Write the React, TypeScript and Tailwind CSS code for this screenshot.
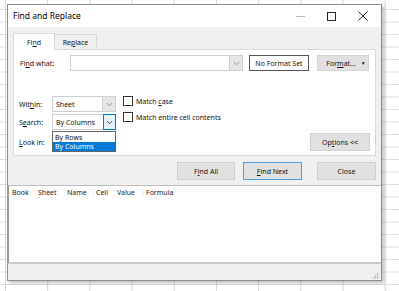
import React from "react";

const U = ({ children }: { children: React.ReactNode }) => (
  <span className="underline underline-offset-[1px] decoration-[0.5px]">{children}</span>
);

const Chevron = ({ color = "#7a7a7a" }: { color?: string }) => (
  <svg width="7" height="5" viewBox="0 0 7 5">
    <path d="M0.8 1 L3.5 3.8 L6.2 1" fill="none" stroke={color} strokeWidth="0.9" />
  </svg>
);

const Checkbox = ({ label }: { label: React.ReactNode }) => (
  <div className="flex items-center h-[10px] gap-[3px]">
    <div className="w-[10px] h-[10px] border border-[#333] bg-white shrink-0" />
    <span className="whitespace-nowrap">{label}</span>
  </div>
);

const Select = ({ value, active = false }: { value: string; active?: boolean }) => (
  <div className="flex h-[16px] w-[64px] border border-[#cfcfcf] bg-white">
    <div className="flex-1 flex items-center pl-[3px] text-[#111]">{value}</div>
    <div
      className={
        active
          ? "w-[13px] flex items-center justify-center border border-[#0078d7] bg-[#e5f1fb] -m-px"
          : "w-[13px] flex items-center justify-center bg-[#e6e6e6] border-l border-[#cfcfcf]"
      }
    >
      <Chevron color={active ? "#333" : "#888"} />
    </div>
  </div>
);

const Button = ({ children, w, primary = false }: { children: React.ReactNode; w: string; primary?: boolean }) => (
  <div
    className={
      "h-[18px] flex items-center justify-center bg-[#e1e1e1] border " +
      (primary ? "border-[#4c9ce0] " : "border-[#cfcfcf] ") +
      w
    }
  >
    {children}
  </div>
);

export default function App() {
  return (
    <div
      className="w-[399px] h-[291px] overflow-hidden bg-white bg-[linear-gradient(to_right,#d6d6d6_1px,transparent_1px),linear-gradient(to_bottom,#dcdcdc_1px,transparent_1px)] bg-[size:42.2px_12.5px] bg-[position:5px_9px] pt-[4px] pl-[7px]"
      style={{ fontFamily: '"Noto Sans", "Open Sans", sans-serif' }}
    >
      <div className="w-[375px] h-[277px] flex flex-col border border-[#8c8c8c] shadow-[2px_2px_3px_rgba(0,0,0,0.25)] text-[7px] leading-none text-[#111]">
        {/* Title bar */}
        <div className="h-[22px] bg-white flex items-center shrink-0">
          <div className="pl-[5px] text-[8.5px] text-black flex-1">Find and Replace</div>
          <div className="flex items-center gap-[22px] pr-[13px]">
            <div className="w-[9px] h-px bg-[#b8b8b8]" />
            <div className="w-[9px] h-[9px] border border-[#222]" />
            <svg width="10" height="10" viewBox="0 0 10 10">
              <path d="M0.5 0.5 L9.5 9.5 M9.5 0.5 L0.5 9.5" stroke="#222" strokeWidth="1" />
            </svg>
          </div>
        </div>

        {/* Body */}
        <div className="h-[158px] bg-[#f0f0f0] shrink-0 flex flex-col">
          {/* Tabs */}
          <div className="flex items-end pl-[5px] pt-[5px] h-[22px]">
            <div className="w-[42px] h-[17px] bg-white border border-b-0 border-[#d9d9d9] flex items-center justify-center relative z-10 -mb-px">
              Fi<U>n</U>d
            </div>
            <div className="w-[42px] h-[15px] border border-b-0 border-l-0 border-[#d9d9d9] flex items-center justify-center">
              Re<U>p</U>lace
            </div>
          </div>
          {/* Panel */}
          <div className="mx-[5px] h-[107px] bg-white border border-[#d9d9d9] flex flex-col relative">
            <div className="flex items-center mt-[5px] h-[16px]">
              <div className="w-[56px] pl-[6px]">
                Fi<U>n</U>d what:
              </div>
              <div className="w-[173px] h-[16px] border border-[#cfcfcf] flex justify-end">
                <div className="w-[13px] bg-[#e6e6e6] border-l border-[#cfcfcf] flex items-center justify-center">
                  <Chevron color="#888" />
                </div>
              </div>
              <div className="ml-[6px] w-[60px] h-[16px] border border-[#555] flex items-center justify-center">
                No Format Set
              </div>
              <div className="ml-[8px] w-[52px] h-[16px] bg-[#e1e1e1] border border-[#d4d4d4] flex items-center justify-center gap-[5px] pl-[6px]">
                <span>
                  For<U>m</U>at...
                </span>
                <span className="text-[5px]">▼</span>
              </div>
            </div>

            <div className="flex mt-[25px]">
              {/* labels + selects */}
              <div className="flex flex-col gap-[2px]">
                <div className="flex items-center h-[16px]">
                  <div className="w-[38px] pl-[5px]">
                    Wit<U>h</U>in:
                  </div>
                  <Select value="Sheet" />
                </div>
                <div className="flex items-center h-[16px] relative">
                  <div className="w-[38px] pl-[5px]">
                    S<U>e</U>arch:
                  </div>
                  <Select value="By Columns" active />
                  <div className="absolute left-[38px] top-[17px] w-[64px] border border-[#646464] bg-white z-20">
                    <div className="h-[10px] flex items-center pl-[2px]">By Rows</div>
                    <div className="h-[9px] flex items-center pl-[2px] bg-[#0078d7] text-white">By Columns</div>
                  </div>
                </div>
                <div className="flex items-center h-[20px]">
                  <div className="w-[38px] pl-[5px]">
                    <U>L</U>ook in:
                  </div>
                </div>
              </div>
              {/* checkboxes */}
              <div className="flex flex-col gap-[6px] ml-[7px]">
                <Checkbox
                  label={
                    <>
                      Match <U>c</U>ase
                    </>
                  }
                />
                <Checkbox label="Match entire cell contents" />
              </div>
              <div className="flex-1" />
              <div className="self-end mb-[1px] mr-[5px]">
                <Button w="w-[60px]">
                  <span>
                    Op<U>t</U>ions &lt;&lt;
                  </span>
                </Button>
              </div>
            </div>
          </div>
          {/* buttons */}
          <div className="flex justify-end items-center mt-[6px] pr-[5px] gap-[8px]">
            <Button w="w-[58px]">
              <span>
                F<U>i</U>nd All
              </span>
            </Button>
            <Button w="w-[59px]" primary>
              <span>
                <U>F</U>ind Next
              </span>
            </Button>
            <div className="ml-[7px]">
              <Button w="w-[59px]">Close</Button>
            </div>
          </div>
        </div>

        {/* Results */}
        <div className="flex-1 bg-white border-t border-[#bdbdbd] border-l-2 border-l-[#9a9a9a] border-b-2 border-b-[#cacaca] -ml-px">
          <div className="flex h-[12px] items-center text-[#222]">
            <div className="w-[27px] pl-[3px] border-r border-[#f0f0f0]">Book</div>
            <div className="w-[29px] pl-[2px] border-r border-[#f0f0f0]">Sheet</div>
            <div className="w-[29px] pl-[2px] border-r border-[#f0f0f0]">Name</div>
            <div className="w-[21px] pl-[2px] border-r border-[#f0f0f0]">Cell</div>
            <div className="w-[29px] pl-[2px] border-r border-[#f0f0f0]">Value</div>
            <div className="pl-[2px]">Formula</div>
          </div>
        </div>
        <div className="h-[16px] bg-[#f0f0f0] shrink-0 flex items-end justify-end pr-[2px] pb-[1px]">
          <svg width="7" height="7" viewBox="0 0 7 7">
            <rect x="5" y="1" width="1.2" height="1.2" fill="#a0a0a0" />
            <rect x="3" y="3" width="1.2" height="1.2" fill="#a0a0a0" />
            <rect x="5" y="3" width="1.2" height="1.2" fill="#a0a0a0" />
            <rect x="1" y="5" width="1.2" height="1.2" fill="#a0a0a0" />
            <rect x="3" y="5" width="1.2" height="1.2" fill="#a0a0a0" />
            <rect x="5" y="5" width="1.2" height="1.2" fill="#a0a0a0" />
          </svg>
        </div>
      </div>
    </div>
  );
}
